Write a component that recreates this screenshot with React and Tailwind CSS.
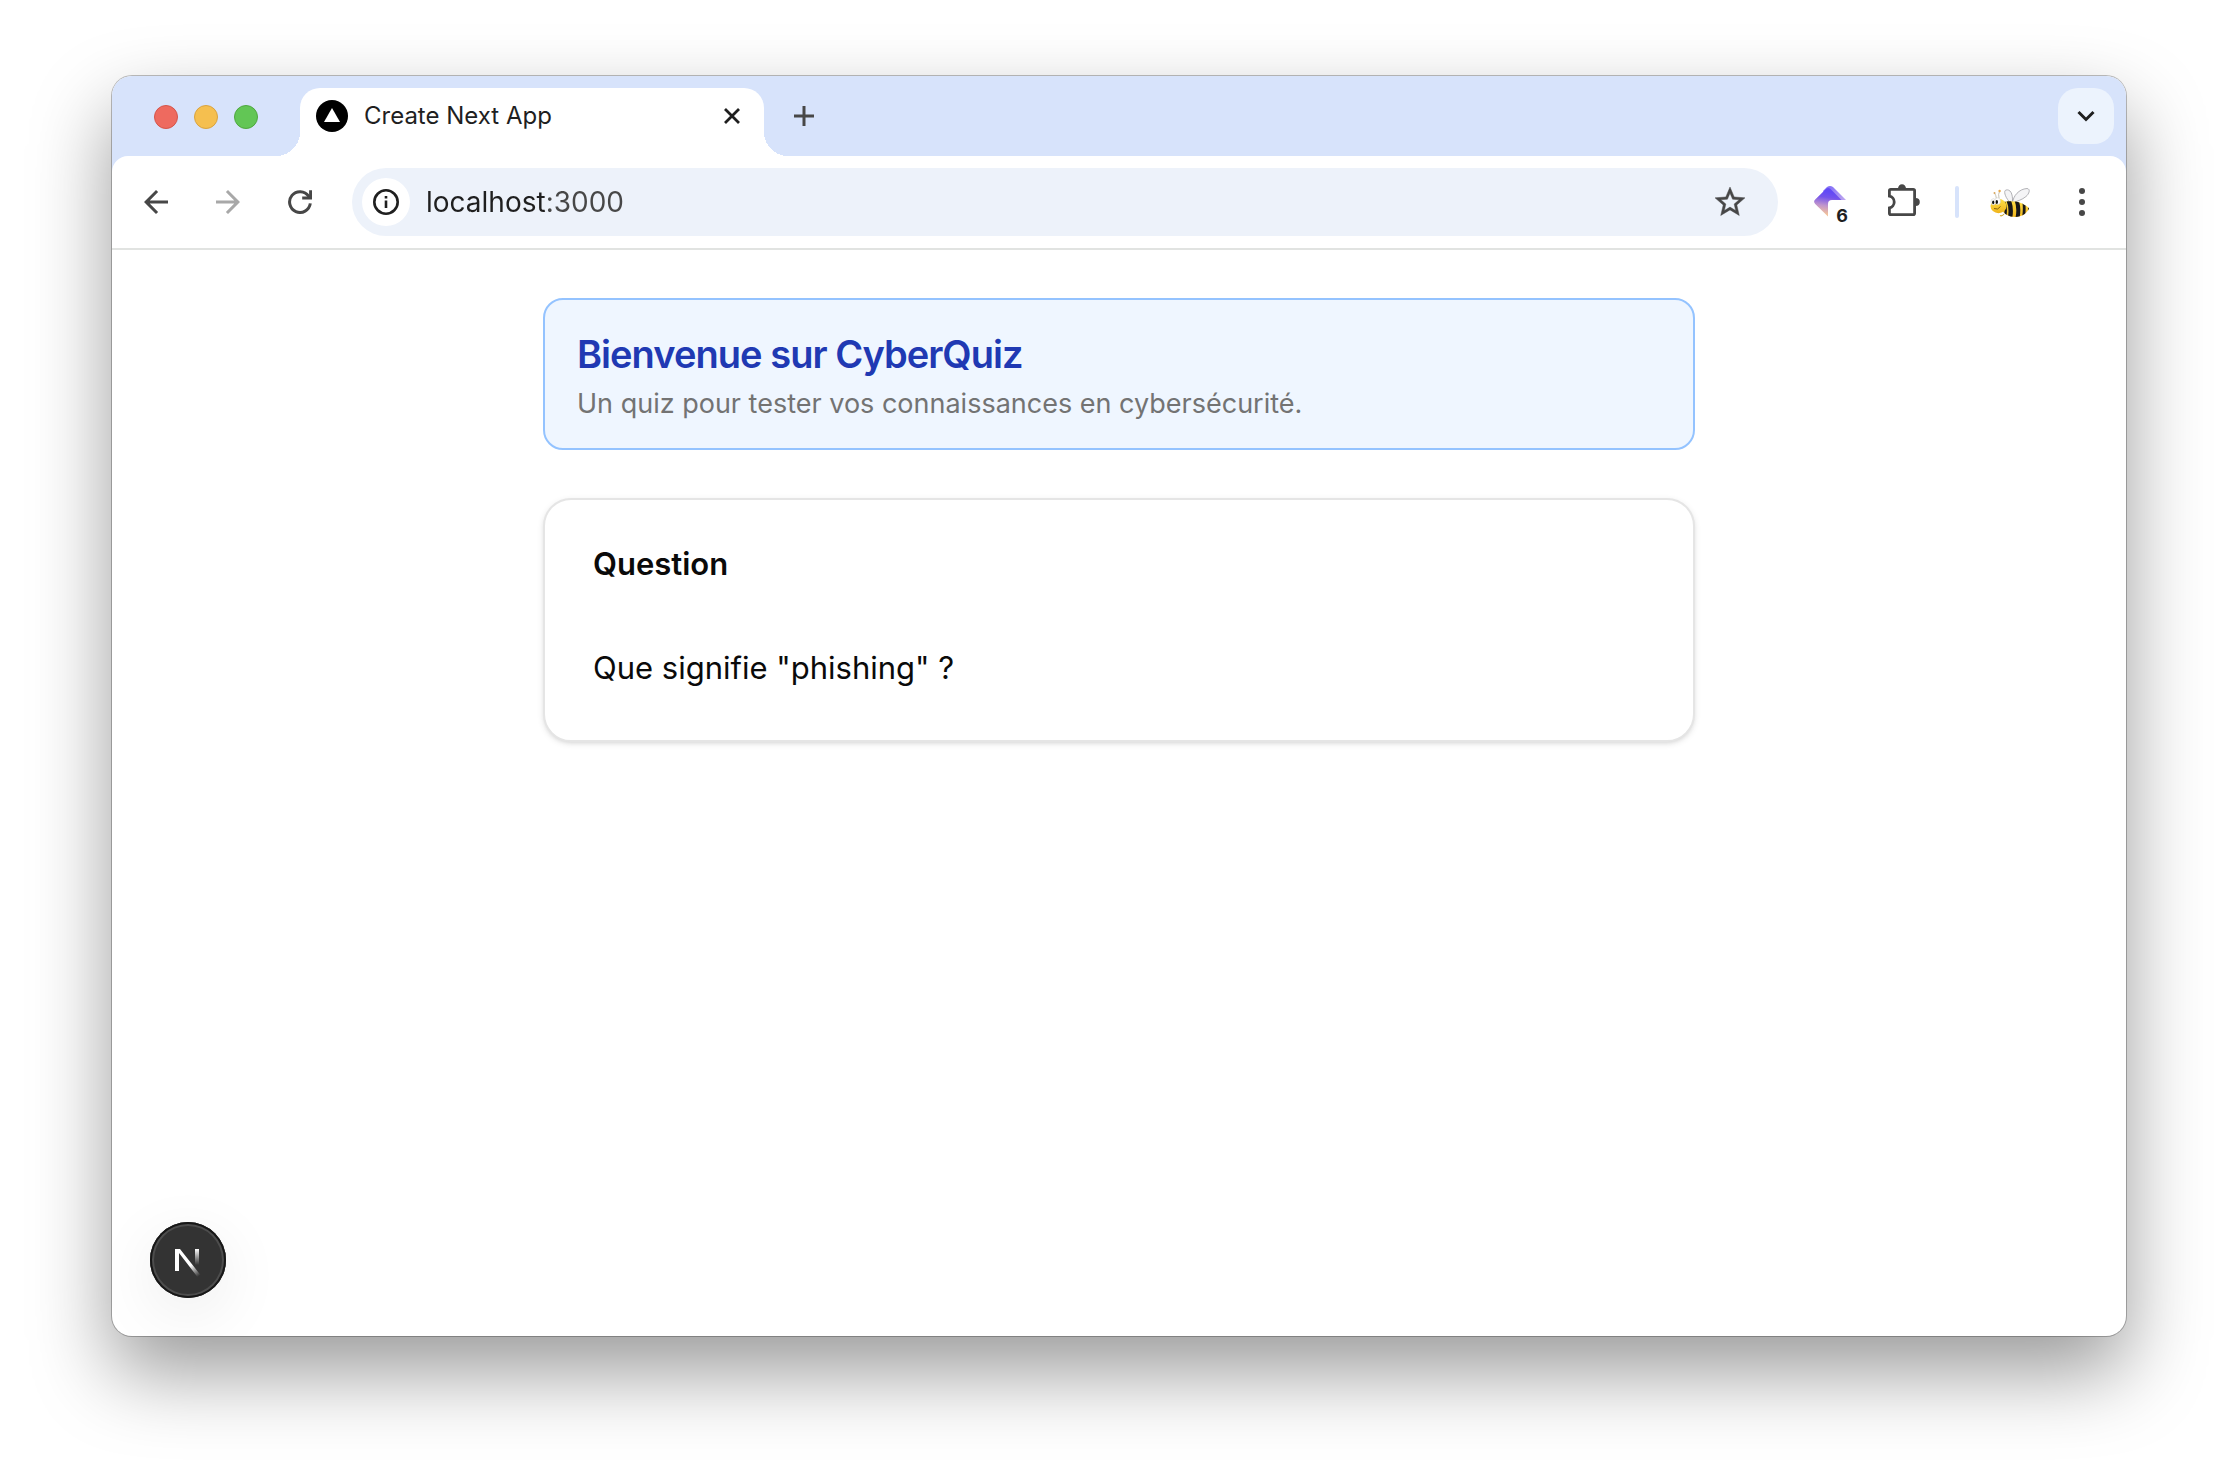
import React, { useState } from "react";

const ICON_BUTTON = "flex h-14 w-14 shrink-0 items-center justify-center rounded-full";

function ArrowIcon({ className }) {
  return (
    <svg viewBox="0 0 24 24" className={className} fill="currentColor">
      <path d="M20 11H7.83l5.59-5.59L12 4l-8 8 8 8 1.41-1.41L7.83 13H20v-2z" />
    </svg>
  );
}

function ReloadIcon() {
  return (
    <svg viewBox="0 0 24 24" className="h-6 w-6" fill="none" stroke="currentColor" strokeWidth="3">
      <path d="M22.3 13.4A10.4 10.4 0 1 1 20.6 6.2L22.2 8" />
      <path d="M22.6 0.2V8.1H14.2" />
    </svg>
  );
}

function PuzzleIcon() {
  return (
    <svg viewBox="0 0 32 36" className="h-9 w-8" fill="currentColor">
      <path
        d="M1.4 12.2V6.8Q1.4 5.4 2.8 5.4H25.2Q26.6 5.4 26.6 6.8V29.2Q26.6 30.6 25.2 30.6H2.8Q1.4 30.6 1.4 29.2V23.8A5.9 5.9 0 0 0 1.4 12.2Z"
        fill="none"
        stroke="currentColor"
        strokeWidth="2.8"
      />
      <path d="M10 4.6a4 4.4 0 0 1 8 0zM27.6 14a4.2 4 0 0 1 0 8z" />
    </svg>
  );
}

function BeeIcon() {
  return (
    <svg viewBox="0 0 40 32" className="h-8 w-10">
      <defs>
        <linearGradient id="beeBody" x1="0" y1="0" x2="0" y2="1">
          <stop offset="0" stopColor="#fde047" />
          <stop offset="1" stopColor="#f0b41c" />
        </linearGradient>
        <clipPath id="beeClip">
          <path d="M12 16.5C18 14.5 27 15 32 17.5C35 19 37.5 20.5 39 22.5C37 27 32 31 25 31C19 31 14 28 12 24Z" />
        </clipPath>
      </defs>
      <g fill="#f4f4f6" stroke="#a0a0a5" strokeWidth="0.8">
        <path d="M20.5 17C15.500 12 13 5 16 4C20 3 23 7 22.5 16Z" />
        <path d="M22.500 17C23 10 29 3 37 2.500C41 3 39 8 36 10.500C32 14 27 15 22.500 17Z" />
      </g>
      <path d="M6.5 13Q6 9 4.500 7M9 12Q8 8 9.500 5.500" fill="none" stroke="#b9b2a0" strokeWidth="0.8" />
      <circle cx="4.500" cy="7" r="1" fill="#d8a860" />
      <circle cx="9.6" cy="5" r="1.2" fill="#e8a94a" />
      <path d="M14 28Q12 30.500 10 29.500" fill="none" stroke="#d4a92c" strokeWidth="1.2" />
      <g clipPath="url(#beeClip)">
        <rect x="12" y="13" width="28" height="19" fill="url(#beeBody)" />
        <g fill="none" stroke="#17171a">
          <path d="M13.500 14Q17 22 15 31" strokeWidth="2.4" />
          <path d="M18.500 14Q22 22 20 32" strokeWidth="4.4" />
          <path d="M26.500 14Q29.500 22 27.500 32" strokeWidth="4" />
          <path d="M33.500 15Q35 22 33.500 31" strokeWidth="2.8" />
          <path d="M39 19V26" strokeWidth="2" />
        </g>
      </g>
      <ellipse cx="8.5" cy="20" rx="8" ry="7.2" fill="url(#beeBody)" />
      <ellipse cx="3.4" cy="15.8" rx="2.4" ry="3.1" fill="#fff" stroke="#bbb" strokeWidth="0.4" />
      <ellipse cx="7.6" cy="15.2" rx="2.9" ry="3.4" fill="#fff" stroke="#bbb" strokeWidth="0.4" />
      <ellipse cx="3.2" cy="16.4" rx="1.1" ry="1.8" fill="#111" />
      <ellipse cx="6.8" cy="16" rx="1.2" ry="1.9" fill="#111" />
      <path d="M4 22.5Q8 24.500 10.500 20.500" fill="none" stroke="#6b4a08" strokeWidth="0.8" />
    </svg>
  );
}

function GemIcon() {
  return (
    <svg viewBox="0 0 34 38" className="h-[38px] w-[34px]">
      <defs>
        <linearGradient id="gemFront" x1="16" y1="6" x2="12" y2="34" gradientUnits="userSpaceOnUse">
          <stop offset="0.1" stopColor="#6249f5" />
          <stop offset="0.3" stopColor="#7453ec" />
          <stop offset="0.6" stopColor="#c095cc" />
          <stop offset="0.9" stopColor="#f3c29b" />
        </linearGradient>
        <linearGradient id="gemSide" x1="16" y1="4" x2="32" y2="18" gradientUnits="userSpaceOnUse">
          <stop stopColor="#8470f7" />
          <stop offset="1" stopColor="#c0a8ee" />
        </linearGradient>
      </defs>
      <path d="M14 4Q17 2 20 4L33 17L31 20L17 18L10 8Z" fill="url(#gemSide)" />
      <path d="M2.2 16.600L13.500 5.400Q15.500 4.200 17.500 6L30 18.500L17 33L15 33.500L2.200 21Q0 18.700 2.200 16.600Z" fill="url(#gemFront)" />
      <path d="M15 38V21Q15 17 19 17H34V38Z" fill="#fff" />
    </svg>
  );
}

function NextIcon() {
  return (
    <svg viewBox="0 0 76 76" className="h-full w-full" fill="none">
      <defs>
        <linearGradient id="nextDiagonal" x1="41" y1="43" x2="49" y2="54" gradientUnits="userSpaceOnUse">
          <stop stopColor="#fff" />
          <stop offset="1" stopColor="#fff" stopOpacity="0" />
        </linearGradient>
        <linearGradient id="nextBar" x1="47" y1="27" x2="47" y2="43" gradientUnits="userSpaceOnUse">
          <stop stopColor="#fff" />
          <stop offset="1" stopColor="#fff" stopOpacity="0" />
        </linearGradient>
      </defs>
      <path d="M25 27H30L50.500 53L47.500 55L29 31V49H25Z" fill="url(#nextDiagonal)" />
      <path d="M45 27H49V43H45Z" fill="url(#nextBar)" />
    </svg>
  );
}

function TabStrip() {
  return (
    <div className="flex h-20 items-end bg-[#d7e3fb] pr-3">
      <div className="flex h-20 items-center gap-4 pt-0.5 pl-[42px]">
        <button aria-label="Fermer" className="h-6 w-6 rounded-full border border-[#d5554a] bg-[#ee6a5f]" />
        <button aria-label="Réduire" className="h-6 w-6 rounded-full border border-[#d9a33f] bg-[#f5bf4f]" />
        <button aria-label="Agrandir" className="h-6 w-6 rounded-full border border-[#4fa73f] bg-[#62c655]" />
      </div>
      <div className="relative ml-[42px] h-[68px] w-[464px] rounded-t-[20px] bg-white">
        <span className="absolute bottom-0 -left-6 h-6 w-6 bg-[radial-gradient(circle_at_0_0,transparent_24px,white_24px)]" />
        <span className="absolute -right-6 bottom-0 h-6 w-6 bg-[radial-gradient(circle_at_100%_0,transparent_24px,white_24px)]" />
        <div className="flex h-14 items-center gap-4 px-4">
          <svg viewBox="0 0 32 32" className="h-8 w-8">
            <circle cx="16" cy="16" r="16" fill="#000" />
            <path d="M16 8L24 22H8Z" fill="#fff" />
          </svg>
          <span className="flex-1 text-2xl text-[#1f1f1f]">Create Next App</span>
          <button aria-label="Fermer l'onglet" className="flex h-8 w-8 items-center justify-center">
            <svg viewBox="0 0 16 16" className="h-4 w-4" stroke="#1f1f1f" strokeWidth="2.8">
              <path d="M1 1L15 15M15 1L1 15" />
            </svg>
          </button>
        </div>
      </div>
      <div className="flex h-[68px] flex-1 items-start justify-between pl-3">
        <button aria-label="Nouvel onglet" className="flex h-14 w-14 items-center justify-center">
          <svg viewBox="0 0 20 20" className="h-5 w-5" stroke="#474747" strokeWidth="3">
            <path d="M0 10H20M10 0V20" />
          </svg>
        </button>
        <button
          aria-label="Rechercher des onglets"
          className="flex h-14 w-14 items-center justify-center rounded-[20px] bg-[#ecf3fd]"
        >
          <svg viewBox="0 0 18 12" className="h-3 w-[18px]" fill="none" stroke="#1f1f1f" strokeWidth="3">
            <path d="M1.5 2L9 9.5L16.5 2" />
          </svg>
        </button>
      </div>
    </div>
  );
}

function Toolbar() {
  const [url, setUrl] = useState("localhost:3000");

  return (
    <div className="bg-[#d7e3fb]">
      <div className="flex h-[94px] items-center rounded-t-2xl border-b-2 border-[#e1e3e1] bg-white px-4 text-[#474747]">
        <div className="mr-6 flex gap-4">
          <button aria-label="Retour" className={ICON_BUTTON}>
            <ArrowIcon className="h-9 w-9" />
          </button>
          <button aria-label="Avancer" disabled className={`${ICON_BUTTON} text-[#a8a8a8]`}>
            <ArrowIcon className="h-9 w-9 rotate-180" />
          </button>
          <button aria-label="Actualiser" className={ICON_BUTTON}>
            <ReloadIcon />
          </button>
        </div>

        <div className="flex h-[68px] min-w-0 flex-1 items-center rounded-full bg-[#edf2fa] pr-5 pl-[10px]">
          <button
            aria-label="Informations sur le site"
            className="flex h-12 w-12 shrink-0 items-center justify-center rounded-full bg-white"
          >
            <svg viewBox="0 0 26 26" className="h-[26px] w-[26px]" fill="none" stroke="#1f1f1f">
              <circle cx="13" cy="13" r="11.7" strokeWidth="2.6" />
              <path d="M13 11.5V19M13 7V9.4" strokeWidth="2.6" />
            </svg>
          </button>
          {/* host is darker than the port */}
          <input
            aria-label="Adresse"
            value={url}
            onChange={(e) => setUrl(e.target.value)}
            className="ml-4 h-12 min-w-0 flex-1 bg-[linear-gradient(90deg,#1f1f1f_122px,#474747_122px)] bg-clip-text text-[28px] text-transparent caret-black outline-none"
          />
          <button aria-label="Ajouter aux favoris" className={ICON_BUTTON}>
            <svg viewBox="0 0 24 24" className="h-9 w-9" fill="currentColor" stroke="currentColor" strokeWidth="0.3">
              <path d="M22 9.24l-7.19-.62L12 2 9.19 8.63 2 9.24l5.46 4.73L5.82 21 12 17.27 18.18 21l-1.63-7.03L22 9.24zM12 15.4l-3.76 2.27 1-4.28-3.32-2.88 4.38-.38L12 6.1l1.71 4.04 4.38.38-3.32 2.88 1 4.28L12 15.4z" />
            </svg>
          </button>
        </div>

        <div className="ml-6 flex items-center">
          <button aria-label="Extension, 6 notifications" className={`relative ${ICON_BUTTON}`}>
            <GemIcon />
            <span className="absolute right-[10px] bottom-1 text-lg leading-5 font-bold text-[#1f1f1f]">6</span>
          </button>
          <button aria-label="Extensions" className={`ml-[18px] ${ICON_BUTTON}`}>
            <PuzzleIcon />
          </button>
          <span className="mx-[23px] h-8 w-1 rounded-full bg-[#d7e3fb]" />
          <button aria-label="Profil" className={ICON_BUTTON}>
            <BeeIcon />
          </button>
          <button aria-label="Menu" className={`ml-4 ${ICON_BUTTON}`}>
            <svg viewBox="0 0 6 28" className="h-7 w-[6px]" fill="currentColor">
              <circle cx="3" cy="3" r="3" />
              <circle cx="3" cy="14" r="3" />
              <circle cx="3" cy="25" r="3" />
            </svg>
          </button>
        </div>
      </div>
    </div>
  );
}

function WelcomeAlert() {
  return (
    <div
      role="alert"
      className="rounded-[20px] border-2 border-[#94c3ff] bg-[#eff6ff] px-8 py-6"
    >
      <h1 className="text-[38px] leading-[60px] font-semibold tracking-tight text-[#2039b3]">
        Bienvenue sur CyberQuiz
      </h1>
      <p className="text-[27px] leading-10 text-[#737373]">
        Un quiz pour tester vos connaissances en cybersécurité.
      </p>
    </div>
  );
}

function QuestionCard({ question }) {
  return (
    <div className="flex flex-col gap-16 rounded-[28px] border-2 border-[#e5e5e5] bg-white p-12 text-[31px] text-[#0a0a0a] shadow-[0_2px_6px_rgba(0,0,0,0.1),0_2px_4px_-2px_rgba(0,0,0,0.1)]">
      <h2 className="leading-8 font-semibold">Question</h2>
      <p className="leading-12">{question}</p>
    </div>
  );
}

function App() {
  return (
    <div className="flex min-h-screen flex-col bg-white px-28 pt-[76px] pb-[148px] font-['Inter','Liberation_Sans',sans-serif]">
      <div className="relative flex flex-1 flex-col overflow-hidden rounded-[20px] bg-white shadow-[0_0_0_1px_rgba(0,0,0,0.25),0_36px_80px_rgba(0,0,0,0.4)]">
        <TabStrip />
        <Toolbar />
        <main className="mx-auto flex w-full max-w-[1152px] flex-1 flex-col gap-12 pt-12">
          <WelcomeAlert />
          <QuestionCard question={'Que signifie "phishing" ?'} />
        </main>
        <button
          aria-label="Outils de développement Next.js"
          className="absolute bottom-[38px] left-[38px] h-[76px] w-[76px] rounded-full bg-[#333] shadow-[inset_0_0_0_2px_#171717,inset_0_0_0_4px_#4d4d4d,0_16px_64px_rgba(0,0,0,0.08)]"
        >
          <NextIcon />
        </button>
      </div>
    </div>
  );
}

export default App;
